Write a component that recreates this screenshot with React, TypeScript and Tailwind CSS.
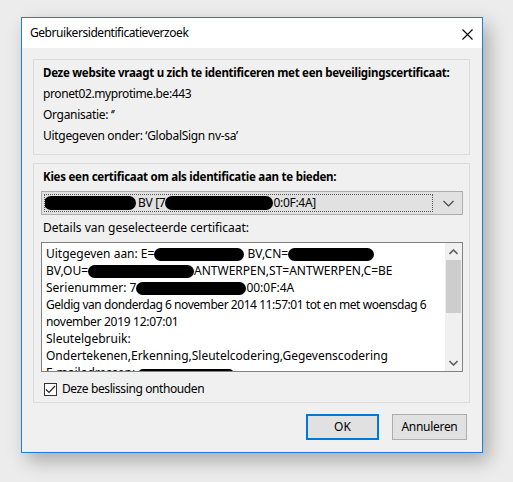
import React from "react";

const Blob = ({ w, h = 13, className = "" }: { w: number; h?: number; className?: string }) => (
  <span
    className={"inline-block bg-black rounded-full align-middle " + className}
    style={{ width: w, height: h }}
  />
);

export default function App() {
  return (
    <div
      className="w-[513px] h-[482px] bg-[#ececec] pl-[21px] pt-[17px] overflow-hidden"
      style={{ fontFamily: '"Noto Sans", "Open Sans", sans-serif' }}
    >
      <div className="w-[462px] h-[436px] border border-[#1b7fd6] bg-[#f0f0f0] shadow-[6px_8px_18px_rgba(0,0,0,0.28)] flex flex-col text-[12px] text-[#000]">
        {/* title bar */}
        <div className="h-[30px] bg-white flex items-center justify-between pl-[8px] pr-[9px] shrink-0">
          <span className="text-[12px] leading-none tracking-[-0.45px]">Gebruikersidentificatieverzoek</span>
          <svg width="11" height="11" viewBox="0 0 11 11" className="mt-[2px]">
            <path d="M0.5 0.5 L10.5 10.5 M10.5 0.5 L0.5 10.5" stroke="#000" strokeWidth="1.1" />
          </svg>
        </div>
        {/* body */}
        <div className="flex-1 pl-[11px] pr-[12px] pt-[11px] flex flex-col">
          {/* group 1 */}
          <div className="border border-[#dcdcdc] h-[96px] pl-[9px] pt-[2px] leading-[21px] whitespace-nowrap">
            <div className="font-bold text-[11.5px] tracking-[-0.28px]">Deze website vraagt u zich te identificeren met een beveiligingscertificaat:</div>
            <div className="tracking-[-0.4px]">pronet02.myprotime.be:443</div>
            <div className="tracking-[-0.3px]">Organisatie: ‘’</div>
            <div className="tracking-[-0.3px]">Uitgegeven onder: ‘GlobalSign nv-sa’</div>
          </div>
          {/* group 2 */}
          <div className="border border-[#dcdcdc] h-[240px] mt-[8px] pl-[7px] pr-[6px] pt-[2px] flex flex-col">
            <div className="font-bold text-[11.5px] tracking-[-0.25px] leading-[21px] pl-[2px] whitespace-nowrap">Kies een certificaat om als identificatie aan te bieden:</div>
            <div className="mt-[4px] h-[24px] bg-[#e1e1e1] border border-[#adadad] flex items-center pl-[2px] pr-[8px]">
              <div className="flex-1 h-[18px] border border-dotted border-[#555] flex items-center whitespace-nowrap overflow-hidden tracking-[-0.3px]">
                <Blob w={92} h={14} className="-ml-[1px] mr-[2px]" />
                <span>BV [7</span>
                <Blob w={108} h={14} />
                <span>0:0F:4A]</span>
              </div>
              <svg width="11" height="7" viewBox="0 0 11 7" className="ml-[10px]">
                <path d="M0.5 1 L5.5 6 L10.5 1" stroke="#444" strokeWidth="1.1" fill="none" />
              </svg>
            </div>
            <div className="leading-[21px] mt-[2px] pl-[2px]">Details van geselecteerde certificaat:</div>
            <div className="mt-[4px] h-[130px] bg-white border border-[#828282] flex overflow-hidden">
              <div className="flex-1 pl-[4px] pt-[2px] leading-[17px] overflow-hidden whitespace-nowrap">
                <div>Uitgegeven aan: E=<Blob w={90} /> BV,CN=<Blob w={86} /></div>
                <div>BV,OU=<Blob w={106} />ANTWERPEN,ST=ANTWERPEN,C=BE</div>
                <div>Serienummer: 7<Blob w={110} />00:0F:4A</div>
                <div className="tracking-[-0.45px]">Geldig van donderdag 6 november 2014 11:57:01 tot en met woensdag 6</div>
                <div className="tracking-[-0.3px]">november 2019 12:07:01</div>
                <div>Sleutelgebruik:</div>
                <div>Ondertekenen,Erkenning,Sleutelcodering,Gegevenscodering</div>
                <div className="h-[14px] overflow-hidden">E-mailadressen: <Blob w={96} h={10} /></div>
              </div>
              <div className="w-[17px] bg-[#f0f0f0] flex flex-col items-center shrink-0">
                <div className="h-[17px] flex items-center justify-center">
                  <svg width="9" height="6" viewBox="0 0 9 6">
                    <path d="M0.5 5 L4.5 1 L8.5 5" stroke="#606060" strokeWidth="1.6" fill="none" />
                  </svg>
                </div>
                <div className="w-[15px] h-[53px] bg-[#cdcdcd]" />
                <div className="flex-1" />
                <div className="h-[17px] flex items-center justify-center">
                  <svg width="9" height="6" viewBox="0 0 9 6">
                    <path d="M0.5 1 L4.5 5 L8.5 1" stroke="#606060" strokeWidth="1.6" fill="none" />
                  </svg>
                </div>
              </div>
            </div>
            <div className="mt-[8px] flex items-center pl-[3px]">
              <div className="w-[13px] h-[13px] border border-[#333] bg-white flex items-center justify-center">
                <svg width="11" height="9" viewBox="0 0 11 9">
                  <path d="M1 4.5 L4 7.5 L10 1" stroke="#222" strokeWidth="1.2" fill="none" />
                </svg>
              </div>
              <span className="ml-[5px] tracking-[-0.4px]">Deze beslissing onthouden</span>
            </div>
          </div>
          {/* buttons */}
          <div className="flex justify-end mt-[11px] pr-[3px] gap-[13px]">
            <button className="w-[73px] h-[26px] bg-[#e1e1e1] border-2 border-[#0078d7] text-[12px]">OK</button>
            <button className="w-[75px] h-[26px] bg-[#e1e1e1] border border-[#adadad] text-[12px] tracking-[-0.3px]">Annuleren</button>
          </div>
        </div>
      </div>
    </div>
  );
}
